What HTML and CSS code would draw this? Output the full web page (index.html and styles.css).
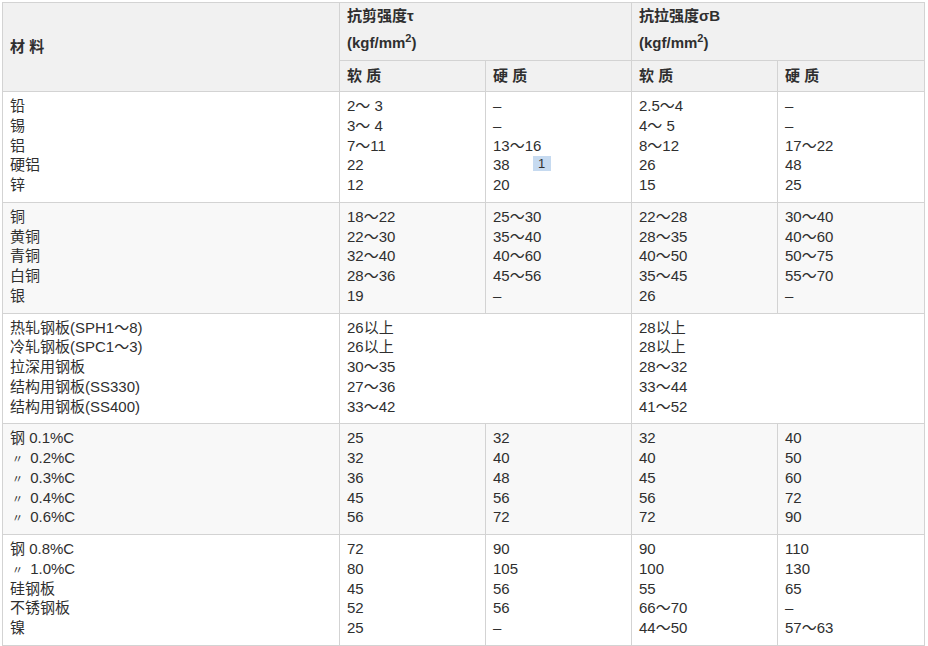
FILE: index.html
```html
<!DOCTYPE html>
<html lang="zh-CN">
<head>
<meta charset="utf-8">
<title>材料强度表</title>
<link rel="stylesheet" href="styles.css">
</head>
<body>
<table class="data">
  <colgroup>
    <col class="c-mat">
    <col class="c-val">
    <col class="c-val">
    <col class="c-val">
    <col class="c-last">
  </colgroup>
  <thead>
    <tr class="h1">
      <th rowspan="2" class="mat-h">材 料</th>
      <th colspan="2"><div class="l1">抗剪强度τ</div><div class="l2">(kgf/mm<sup>2</sup>)</div></th>
      <th colspan="2"><div class="l1">抗拉强度σB</div><div class="l2">(kgf/mm<sup>2</sup>)</div></th>
    </tr>
    <tr class="h2">
      <th>软 质</th>
      <th>硬 质</th>
      <th>软 质</th>
      <th>硬 质</th>
    </tr>
  </thead>
  <tbody>
    <tr class="grp">
      <td>铅<br>锡<br>铝<br>硬铝<br>锌</td>
      <td>2～ 3<br>3～ 4<br>7～11<br>22<br>12</td>
      <td>–<br>–<br>13～16<br>38<span class="badge">1</span><br>20</td>
      <td>2.5～4<br>4～ 5<br>8～12<br>26<br>15</td>
      <td>–<br>–<br>17～22<br>48<br>25</td>
    </tr>
    <tr class="grp alt">
      <td>铜<br>黄铜<br>青铜<br>白铜<br>银</td>
      <td>18～22<br>22～30<br>32～40<br>28～36<br>19</td>
      <td>25～30<br>35～40<br>40～60<br>45～56<br>–</td>
      <td>22～28<br>28～35<br>40～50<br>35～45<br>26</td>
      <td>30～40<br>40～60<br>50～75<br>55～70<br>–</td>
    </tr>
    <tr class="grp">
      <td>热轧钢板(SPH1～8)<br>冷轧钢板(SPC1～3)<br>拉深用钢板<br>结构用钢板(SS330)<br>结构用钢板(SS400)</td>
      <td colspan="2">26以上<br>26以上<br>30～35<br>27～36<br>33～42</td>
      <td colspan="2">28以上<br>28以上<br>28～32<br>33～44<br>41～52</td>
    </tr>
    <tr class="grp alt">
      <td>钢 0.1%C<br><span class="ditto">〃</span> 0.2%C<br><span class="ditto">〃</span> 0.3%C<br><span class="ditto">〃</span> 0.4%C<br><span class="ditto">〃</span> 0.6%C</td>
      <td>25<br>32<br>36<br>45<br>56</td>
      <td>32<br>40<br>48<br>56<br>72</td>
      <td>32<br>40<br>45<br>56<br>72</td>
      <td>40<br>50<br>60<br>72<br>90</td>
    </tr>
    <tr class="grp">
      <td>钢 0.8%C<br><span class="ditto">〃</span> 1.0%C<br>硅钢板<br>不锈钢板<br>镍</td>
      <td>72<br>80<br>45<br>52<br>25</td>
      <td>90<br>105<br>56<br>56<br>–</td>
      <td>90<br>100<br>55<br>66～70<br>44～50</td>
      <td>110<br>130<br>65<br>–<br>57～63</td>
    </tr>
  </tbody>
</table>
</body>
</html>
```
FILE: styles.css
```css
html, body {
  margin: 0;
  padding: 0;
  background: #ffffff;
}

body {
  font-family: "Liberation Sans", "Noto Sans CJK SC", Arial, sans-serif;
  font-size: 15px;
  color: #2f2f2f;
}

.data {
  margin: 2px 0 0 2px;
  border-collapse: separate;
  border-spacing: 0;
  border-left: 1px solid #d3d3d3;
  border-top: 1px solid #d3d3d3;
  table-layout: fixed;
  width: 923px;
}

.c-mat { width: 337px; }
.c-val { width: 146px; }
.c-last { width: 147px; }

.data th,
.data td {
  border-right: 1px solid #d3d3d3;
  border-bottom: 1px solid #d3d3d3;
  text-align: left;
  padding: 0 7px;
  white-space: nowrap;
}

.data th {
  background: #f1f1f1;
  font-weight: bold;
  color: #2f2f2f;
}

.h1 th {
  vertical-align: top;
  padding-top: 1px;
  padding-bottom: 4px;
}

.h1 th.mat-h {
  vertical-align: middle;
  padding-top: 0;
  padding-bottom: 3px;
}

.l1 {
  height: 24px;
  line-height: 24px;
}

.l2 {
  height: 28px;
  line-height: 30px;
}

.l2 sup {
  font-size: 11px;
  vertical-align: 6px;
  line-height: 0;
}

.h2 th {
  height: 30px;
  line-height: 30px;
  vertical-align: middle;
}

.grp td {
  vertical-align: top;
  line-height: 19.75px;
  padding-top: 4px;
  padding-bottom: 7px;
  background: #ffffff;
}

.grp.alt td {
  background: #f8f8f8;
}

.ditto {
  font-size: 11px;
  line-height: 0;
  margin-left: 2px;
  margin-right: 3px;
}

.badge {
  display: inline-block;
  width: 18px;
  height: 15px;
  line-height: 15px;
  margin-left: 23px;
  background: #c6daf0;
  text-align: center;
  font-size: 13px;
  vertical-align: 2px;
}
```
